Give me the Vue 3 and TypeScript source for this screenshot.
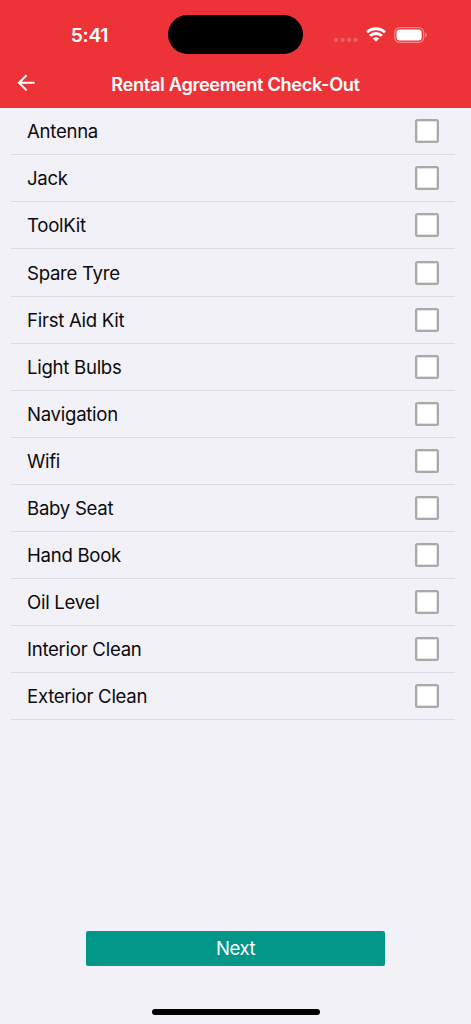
<script setup lang="ts">
import { ref } from 'vue'

interface CheckItem {
  label: string
  checked: boolean
}

const items = ref<CheckItem[]>(
  [
    'Antenna',
    'Jack',
    'ToolKit',
    'Spare Tyre',
    'First Aid Kit',
    'Light Bulbs',
    'Navigation',
    'Wifi',
    'Baby Seat',
    'Hand Book',
    'Oil Level',
    'Interior Clean',
    'Exterior Clean',
  ].map((label) => ({ label, checked: false })),
)
</script>

<template>
  <div class="screen">
    <header class="header">
      <div class="status">
        <span class="time">5:41</span>
        <div class="island"></div>
        <div class="indicators">
          <svg class="dots" width="24" height="4" viewBox="0 0 24 4" fill="#fff" fill-opacity="0.22">
            <rect x="0" y="0" width="4" height="4" rx="1.4" />
            <rect x="6.5" y="0" width="4" height="4" rx="1.4" />
            <rect x="13" y="0" width="4" height="4" rx="1.4" />
            <rect x="19.5" y="0" width="4" height="4" rx="1.4" />
          </svg>
          <svg class="wifi" width="20" height="15" viewBox="0 0 20 15" fill="none" stroke="#fff" stroke-width="2.9">
            <path d="M0.9 5.3C6 0.5 14 0.5 19.1 5.3" />
            <path d="M4.1 8.8C7.3 5.8 12.7 5.8 15.9 8.8" />
            <path d="M6.9 11.6C8.6 9.9 11.4 9.9 13.1 11.6L10 14.8Z" fill="#fff" stroke="none" />
          </svg>
          <svg class="battery" width="34" height="16" viewBox="0 0 34 16">
            <rect x="0.7" y="0.7" width="29" height="14.6" rx="4.8" fill="none" stroke="#fff" stroke-opacity="0.42" stroke-width="1.2" />
            <rect x="2.5" y="2.5" width="25.2" height="11" rx="3.2" fill="#fff" />
            <path d="M31.2 5.6C33.2 6.3 33.2 9.7 31.2 10.4Z" fill="#fff" fill-opacity="0.5" />
          </svg>
        </div>
      </div>
      <div class="nav">
        <button class="back" aria-label="Back">
          <svg width="20" height="18" viewBox="0 0 20 18" fill="none" stroke="#fff" stroke-width="2">
            <path d="M9.6 1.2L2 8.8L9.6 16.4M2 8.8H17.7" />
          </svg>
        </button>
        <h1 class="title">Rental Agreement Check-Out</h1>
      </div>
    </header>

    <main class="list">
      <label v-for="item in items" :key="item.label" class="row">
        <span class="label">{{ item.label }}</span>
        <input v-model="item.checked" class="box" type="checkbox" />
      </label>
    </main>

    <footer class="footer">
      <button class="next">Next</button>
      <div class="home"></div>
    </footer>
  </div>
</template>

<style>
body {
  margin: 0;
  background: #f2f1f7;
}
</style>

<style scoped>
.screen {
  display: flex;
  flex-direction: column;
  width: 471px;
  height: 1024px;
  overflow: hidden;
  background: #f2f1f7;
  color: #0b0b0d;
  font-family: Inter, 'Liberation Sans', sans-serif;
}

.header {
  flex: none;
  height: 107.5px;
  background: #ee3338;
  color: #fff;
}

.status {
  display: grid;
  grid-template-columns: 168px 135px 1fr;
  align-items: center;
  height: 40px;
  padding-top: 15px;
}

.time {
  padding: 0 0 0 11px;
  text-align: center;
  font-size: 19.3px;
  font-weight: 600;
  letter-spacing: -0.3px;
}

.island {
  height: 39.4px;
  margin-bottom: 0.6px;
  border-radius: 20px;
  background: #000;
}

.indicators {
  display: flex;
  align-items: center;
  padding-left: 31px;
}

.dots {
  margin-top: 10px;
}

.wifi {
  margin: -1px 0 0 8px;
}

.battery {
  margin-left: 8px;
}

.nav {
  display: grid;
  grid-template-columns: 52px 1fr 52px;
  align-items: center;
  height: 52.5px;
}

.back {
  display: flex;
  margin: 3px 0 0 16.6px;
  padding: 0;
  border: 0;
  background: none;
}

.title {
  margin: 6px 0 0;
  text-align: center;
  white-space: nowrap;
  font-size: 18.2px;
  font-weight: 600;
  line-height: 24px;
  letter-spacing: -0.33px;
}

.list {
  flex: 1;
  padding: 0.7px 16px 0 11px;
}

.row {
  display: flex;
  align-items: center;
  justify-content: space-between;
  box-sizing: border-box;
  height: 47.1px;
  padding: 0 16px;
  border-bottom: 1px solid #dcdbe1;
}

.label {
  font-size: 18.6px;
  line-height: 24px;
  letter-spacing: -0.28px;
}

.box {
  appearance: none;
  box-sizing: border-box;
  width: 24px;
  height: 24px;
  margin: 0;
  border: 2px solid #a9a9a9;
  border-radius: 2.5px;
  background: #fff;
  box-shadow: inset 0 0 0 1px #e2e2e2;
}

.box:checked {
  background: #009688;
}

.footer {
  display: flex;
  flex: none;
  flex-direction: column;
  align-items: center;
  height: 93.5px;
}

.next {
  width: 299px;
  height: 35px;
  padding: 0;
  border: 0;
  border-radius: 2px;
  background: #009688;
  color: #fff;
  font: 18.6px/35px Inter, 'Liberation Sans', sans-serif;
  letter-spacing: -0.5px;
}

.home {
  width: 168px;
  height: 6px;
  margin-top: 43.5px;
  border-radius: 3px;
  background: #000;
}
</style>
